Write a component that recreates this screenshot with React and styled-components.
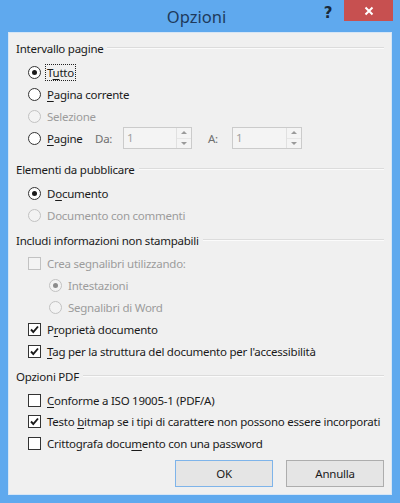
import React from "react";
import styled, { createGlobalStyle } from "styled-components";

const GlobalStyle = createGlobalStyle`
  html, body {
    margin: 0;
    padding: 0;
    background: #5fa9ee;
  }
  body {
    font-family: "Noto Sans", "Open Sans", sans-serif;
    font-size: 11.5px;
    letter-spacing: -0.25px;
    color: #1a1a1a;
  }
`;

const Window = styled.div`
  width: 400px;
  height: 503px;
  background: #5fa9ee;
  display: flex;
  flex-direction: column;
  box-sizing: border-box;
`;

const TitleBar = styled.div`
  height: 32px;
  flex-shrink: 0;
  display: flex;
  align-items: flex-start;
`;

const Side = styled.div`
  flex: 1 1 0;
  display: flex;
  justify-content: flex-end;
  align-items: flex-start;
  padding-right: ${(p) => (p.$right ? 7 : 0)}px;
`;

const Title = styled.div`
  font-size: 16.5px;
  letter-spacing: 0;
  line-height: 33px;
  color: #1e3a5c;
`;

const Help = styled.div`
  width: 20px;
  height: 26px;
  font-family: "DejaVu Sans", sans-serif;
  font-weight: bold;
  font-size: 15px;
  line-height: 27px;
  text-align: center;
  color: #1a2a3a;
  margin-right: 6px;
`;

const Close = styled.div`
  width: 49px;
  height: 21px;
  background: #c75050;
  display: flex;
  align-items: center;
  justify-content: center;
`;

const Panel = styled.div`
  flex: 1;
  margin: 0 8px 8px;
  background: #f0f0f0;
  border: 1px solid #d6e6f6;
  padding: 4px 7px 0 7px;
  display: flex;
  flex-direction: column;
`;

const Section = styled.div`
  display: flex;
  flex-direction: column;
  margin-bottom: ${(p) => (p.$extra ? 9 : 3)}px;
`;

const Heading = styled.div`
  height: 22px;
  margin-bottom: ${(p) => (p.$tight ? 1 : 2)}px;
  display: flex;
  align-items: center;
  gap: 4px;
  white-space: nowrap;
  color: #1a1a1a;

  &::after {
    content: "";
    flex: 1;
    height: 1px;
    background: #dcdcdc;
    border-bottom: 1px solid #fbfbfb;
  }
`;

const Row = styled.div`
  height: ${(p) => p.$h || 22}px;
  display: flex;
  align-items: center;
  padding-left: ${(p) => (p.$sub ? 33 : 12)}px;
  gap: 6px;
  white-space: nowrap;
  color: ${(p) => (p.$disabled ? "#9c9c9c" : "#1a1a1a")};
`;

const RadioMark = styled.span`
  width: 13px;
  height: 13px;
  flex-shrink: 0;
  box-sizing: border-box;
  border-radius: 50%;
  border: 1px solid ${(p) => (p.$disabled ? "#c2c2c2" : "#333")};
  background: ${(p) => (p.$disabled ? "#f3f3f3" : "#fff")};
  display: flex;
  align-items: center;
  justify-content: center;

  &::after {
    content: "";
    width: 5px;
    height: 5px;
    border-radius: 50%;
    background: ${(p) => (p.$disabled ? "#8c8c8c" : "#1a1a1a")};
    display: ${(p) => (p.$checked ? "block" : "none")};
  }
`;

const CheckMark = styled.span`
  width: 13px;
  height: 13px;
  flex-shrink: 0;
  box-sizing: border-box;
  border: 1px solid ${(p) => (p.$disabled ? "#c2c2c2" : "#333")};
  background: ${(p) => (p.$disabled ? "#f3f3f3" : "#fff")};
  display: flex;
  align-items: center;
  justify-content: center;
`;

const Focus = styled.span`
  outline: 1px dotted #222;
  outline-offset: 0;
  padding: 0 1px;
  margin-left: -1px;
`;

const U = styled.span`
  text-decoration: underline;
  text-underline-offset: 2px;
`;

const PagesLabel = styled.span`
  width: 42px;
`;

const Label = styled.span`
  color: #6f6f6f;
  width: ${(p) => p.$w}px;
`;

const Spin = styled.div`
  width: ${(p) => p.$w}px;
  height: 22px;
  box-sizing: border-box;
  border: 1px solid #cbcbcb;
  background: #f4f4f4;
  display: flex;
  margin-right: ${(p) => p.$mr || 0}px;
`;

const SpinValue = styled.div`
  flex: 1;
  padding-left: 3px;
  line-height: 20px;
  color: #a0a0a0;
`;

const SpinArrows = styled.div`
  width: 14px;
  border-left: 1px solid #e0e0e0;
  display: flex;
  flex-direction: column;
`;

const Arrow = styled.div`
  flex: 1;
  display: flex;
  align-items: center;
  justify-content: center;
  border-top: ${(p) => (p.$down ? "1px solid #e6e6e6" : "none")};

  &::after {
    content: "";
    border-left: 3px solid transparent;
    border-right: 3px solid transparent;
    ${(p) => (p.$down ? "border-top" : "border-bottom")}: 3px solid #9a9a9a;
  }
`;

const Buttons = styled.div`
  margin-top: auto;
  margin-bottom: 7px;
  display: flex;
  justify-content: flex-end;
  gap: 13px;
`;

const Button = styled.div`
  width: 98px;
  height: 27px;
  box-sizing: border-box;
  border: 1px solid ${(p) => (p.$default ? "#7eb4ea" : "#adadad")};
  background: #e5e5e5;
  display: flex;
  align-items: center;
  justify-content: center;
  color: #1a1a1a;
`;

function Radio({ checked, disabled, sub, children }) {
  return (
    <Row $disabled={disabled} $sub={sub}>
      <RadioMark $checked={checked} $disabled={disabled} />
      {children}
    </Row>
  );
}

function Check({ checked, disabled, h, children }) {
  return (
    <Row $disabled={disabled} $h={h}>
      <CheckMark $disabled={disabled}>
        {checked && (
          <svg width="11" height="11" viewBox="0 0 11 11">
            <path d="M2 5.5 L4.3 8 L9 2.5" fill="none" stroke="#1a1a1a" strokeWidth="1.9" />
          </svg>
        )}
      </CheckMark>
      {children}
    </Row>
  );
}

function SpinBox({ w, mr }) {
  return (
    <Spin $w={w} $mr={mr}>
      <SpinValue>1</SpinValue>
      <SpinArrows>
        <Arrow />
        <Arrow $down />
      </SpinArrows>
    </Spin>
  );
}

export default function App() {
  return (
    <Window>
      <GlobalStyle />
      <TitleBar>
        <Side />
        <Title>Opzioni</Title>
        <Side $right>
          <Help>?</Help>
          <Close>
            <svg width="10" height="10" viewBox="0 0 10 10">
              <path d="M1.5 1.5 L8.5 8.5 M8.5 1.5 L1.5 8.5" stroke="#fff" strokeWidth="2" />
            </svg>
          </Close>
        </Side>
      </TitleBar>

      <Panel>
        <Section $extra>
          <Heading>Intervallo pagine</Heading>
          <Radio checked>
            <Focus>
              T<U>u</U>tto
            </Focus>
          </Radio>
          <Radio>
            <span>
              <U>P</U>agina corrente
            </span>
          </Radio>
          <Radio disabled>Selezione</Radio>
          <Radio>
            <PagesLabel>
              <U>P</U>agine
            </PagesLabel>
            <Label $w={22}>Da:</Label>
            <SpinBox w={69} mr={10} />
            <Label $w={18}>A:</Label>
            <SpinBox w={70} />
          </Radio>
        </Section>

        <Section>
          <Heading>Elementi da pubblicare</Heading>
          <Radio checked>
            <span>
              D<U>o</U>cumento
            </span>
          </Radio>
          <Radio disabled>Documento con commenti</Radio>
        </Section>

        <Section>
          <Heading $tight>Includi informazioni non stampabili</Heading>
          <Check disabled>Crea segnalibri utilizzando:</Check>
          <Radio sub checked disabled>
            Intestazioni
          </Radio>
          <Radio sub disabled>
            Segnalibri di Word
          </Radio>
          <Check checked>
            <span>
              P<U>r</U>oprietà documento
            </span>
          </Check>
          <Check checked>
            <span>
              <U>T</U>ag per la struttura del documento per l'accessibilità
            </span>
          </Check>
        </Section>

        <Section>
          <Heading>Opzioni PDF</Heading>
          <Check>
            <span>
              <U>C</U>onforme a ISO 19005-1 (PDF/A)
            </span>
          </Check>
          <Check checked h={21}>
            <span>
              Testo <U>b</U>itmap se i tipi di carattere non possono essere incorporati
            </span>
          </Check>
          <Check>
            <span>
              Crittografa docu<U>m</U>ento con una password
            </span>
          </Check>
        </Section>

        <Buttons>
          <Button $default>OK</Button>
          <Button>Annulla</Button>
        </Buttons>
      </Panel>
    </Window>
  );
}
